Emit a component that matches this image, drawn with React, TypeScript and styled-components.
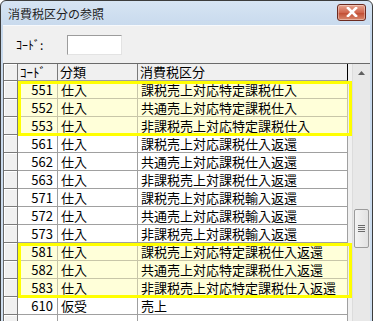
import React from "react";
import styled, { createGlobalStyle } from "styled-components";

const GlobalStyle = createGlobalStyle`
  html, body {
    margin: 0;
    padding: 0;
    background: #ffffff;
    overflow: hidden;
  }
  body {
    font-family: "Noto Sans CJK JP", "DejaVu Sans", sans-serif;
  }
`;

type Row = { code: string; kind: string; name: string };

const groupA: Row[] = [
  { code: "551", kind: "仕入", name: "課税売上対応特定課税仕入" },
  { code: "552", kind: "仕入", name: "共通売上対応特定課税仕入" },
  { code: "553", kind: "仕入", name: "非課税売上対応特定課税仕入" },
];
const plain: Row[] = [
  { code: "561", kind: "仕入", name: "課税売上対応課税仕入返還" },
  { code: "562", kind: "仕入", name: "共通売上対応課税仕入返還" },
  { code: "563", kind: "仕入", name: "非課税売上対課税仕入返還" },
  { code: "571", kind: "仕入", name: "課税売上対応課税輸入返還" },
  { code: "572", kind: "仕入", name: "共通売上対応課税輸入返還" },
  { code: "573", kind: "仕入", name: "非課税売上対課税輸入返還" },
];
const groupB: Row[] = [
  { code: "581", kind: "仕入", name: "課税売上対応特定課税仕入返還" },
  { code: "582", kind: "仕入", name: "共通売上対応特定課税仕入返還" },
  { code: "583", kind: "仕入", name: "非課税売上対応特定課税仕入返還" },
];
const tail: Row[] = [{ code: "610", kind: "仮受", name: "売上" }];

export default function App() {
  return (
    <>
      <GlobalStyle />
      <Window>
        <TitleBar>
          <Title>消費税区分の参照</Title>
          <CloseButton>
            <svg width="14" height="10" viewBox="0 0 14 10">
              <path d="M3 1 L11 9 M11 1 L3 9" stroke="#fff" strokeWidth="2.6" strokeLinecap="square" />
            </svg>
          </CloseButton>
        </TitleBar>
        <Client>
          <SearchBar>
            <Label>ｺｰﾄﾞ:</Label>
            <CodeInput />
          </SearchBar>
          <GridFrame>
            <GridBody>
              <HeaderRow>
                <RowHead />
                <HeadCell>ｺｰﾄﾞ</HeadCell>
                <HeadCell>分類</HeadCell>
                <HeadCell $last>消費税区分</HeadCell>
              </HeaderRow>
              <Highlight>
                {groupA.map((r) => (
                  <DataRow key={r.code} row={r} marked />
                ))}
              </Highlight>
              {plain.map((r) => (
                <DataRow key={r.code} row={r} />
              ))}
              <Highlight>
                {groupB.map((r) => (
                  <DataRow key={r.code} row={r} marked />
                ))}
              </Highlight>
              {tail.map((r) => (
                <DataRow key={r.code} row={r} />
              ))}
              <SelectedRow>
                <RowHead />
                <Cell />
                <Cell />
                <Cell />
              </SelectedRow>
            </GridBody>
            <ScrollBar>
              <ArrowBox>
                <svg width="7" height="4" viewBox="0 0 7 4">
                  <path d="M0 4 L3.5 0 L7 4 Z" fill="#606060" />
                </svg>
              </ArrowBox>
              <Track>
                <Thumb>
                  <Grip />
                  <Grip />
                  <Grip />
                  <Grip />
                </Thumb>
              </Track>
            </ScrollBar>
          </GridFrame>
        </Client>
      </Window>
    </>
  );
}

function DataRow({ row, marked }: { row: Row; marked?: boolean }) {
  return (
    <Line>
      <RowHead />
      <Cell $marked={marked} $num>
        {row.code}
      </Cell>
      <Cell $marked={marked}>{row.kind}</Cell>
      <Cell $marked={marked}>{row.name}</Cell>
    </Line>
  );
}

const Window = styled.div`
  width: 373px;
  height: 340px;
  box-sizing: border-box;
  border: 1px solid #3c3c3c;
  border-radius: 6px 6px 0 0;
  background: linear-gradient(#d6e4f3, #c6d8ec 30px, #cfdff0);
  padding: 0 2px;
  display: flex;
  flex-direction: column;
`;

const TitleBar = styled.div`
  height: 24px;
  display: flex;
  align-items: center;
  justify-content: space-between;
  padding: 0 4px 0 5px;
`;

const Title = styled.span`
  font-size: 12px;
  color: #1e1e1e;
`;

const CloseButton = styled.div`
  width: 27px;
  height: 15px;
  margin-top: -2px;
  border: 1px solid #6b2a20;
  border-radius: 3px;
  background: linear-gradient(#e7a590, #d0664d 50%, #c04a30 51%, #d98a6e);
  display: flex;
  align-items: center;
  justify-content: center;
  box-shadow: inset 0 0 0 1px rgba(255, 255, 255, 0.35);
`;

const Client = styled.div`
  flex: 1;
  background: #f0f0f0;
  border-top: 1px solid #f7f9fc;
  display: flex;
  flex-direction: column;
`;

const SearchBar = styled.div`
  height: 37px;
  display: flex;
  align-items: center;
  padding-left: 13px;
  box-sizing: border-box;
`;

const Label = styled.span`
  font-size: 12px;
  color: #000;
  width: 51px;
`;

const CodeInput = styled.div`
  width: 53px;
  height: 18px;
  background: #fff;
  border-top: 1px solid #9c9c9c;
  border-left: 1px solid #9c9c9c;
  border-right: 1px solid #e3e3e3;
  border-bottom: 1px solid #e3e3e3;
  margin-top: 1px;
`;

const GridFrame = styled.div`
  flex: 1;
  display: flex;
  border-top: 1px solid #6a6a6a;
  border-left: 1px solid #6a6a6a;
  background: #f0f0f0;
  min-height: 0;
`;

const GridBody = styled.div`
  width: 348px;
  display: flex;
  flex-direction: column;
`;

const Line = styled.div`
  display: grid;
  grid-template-columns: 14px 40px 80px 1fr;
  height: 18px;
`;

const HeaderRow = styled(Line)`
  height: 17px;
`;

const SelectedRow = styled(Line)`
  box-shadow: inset 0 2px 0 #3399ff;
`;

const RowHead = styled.div`
  box-sizing: border-box;
  background: #f0f0f0;
  border-right: 1px solid #7a7a7a;
  border-bottom: 1px solid #7a7a7a;
  box-shadow: inset 1px 1px 0 #ffffff;
`;

const HeadCell = styled.div<{ $last?: boolean }>`
  box-sizing: border-box;
  font-size: 13px;
  line-height: 15px;
  padding-left: 2px;
  color: #000;
  background: #f0f0f0;
  border-right: 1px solid ${(p) => (p.$last ? "#000" : "#7a7a7a")};
  border-bottom: 1px solid #a0a0a0;
  white-space: nowrap;
`;

const Cell = styled.div<{ $marked?: boolean; $num?: boolean }>`
  box-sizing: border-box;
  font-size: 13px;
  line-height: 17px;
  color: #000;
  white-space: nowrap;
  overflow: hidden;
  background: ${(p) => (p.$marked ? "#ffffd9" : "#ffffff")};
  border-right: 1px solid ${(p) => (p.$marked ? "#c8c6a8" : "#a0a0a0")};
  border-bottom: 1px solid ${(p) => (p.$marked ? "#c8c6a8" : "#a0a0a0")};
  text-align: ${(p) => (p.$num ? "right" : "left")};
  padding: ${(p) => (p.$num ? "0 4px 0 0" : "0 0 0 3px")};
`;

const Highlight = styled.div`
  position: relative;
  &::after {
    content: "";
    position: absolute;
    left: 14px;
    right: -4px;
    top: 0;
    bottom: -1px;
    border: 3px solid #ffff00;
    pointer-events: none;
  }
`;

const ScrollBar = styled.div`
  width: 17px;
  margin-left: 4px;
  display: flex;
  flex-direction: column;
  background: #e8e8e8;
  border-left: 1px solid #dcdcdc;
`;

const ArrowBox = styled.div`
  height: 17px;
  display: flex;
  align-items: center;
  justify-content: center;
`;

const Track = styled.div`
  flex: 1;
  padding-top: 128px;
`;

const Thumb = styled.div`
  height: 37px;
  margin: 0 1px;
  border: 1px solid #9b9b9b;
  border-radius: 2px;
  background: linear-gradient(90deg, #f3f3f3, #e2e2e2);
  display: flex;
  flex-direction: column;
  align-items: center;
  justify-content: center;
  gap: 1px;
`;

const Grip = styled.div`
  width: 7px;
  height: 1px;
  background: #6a6a6a;
`;
